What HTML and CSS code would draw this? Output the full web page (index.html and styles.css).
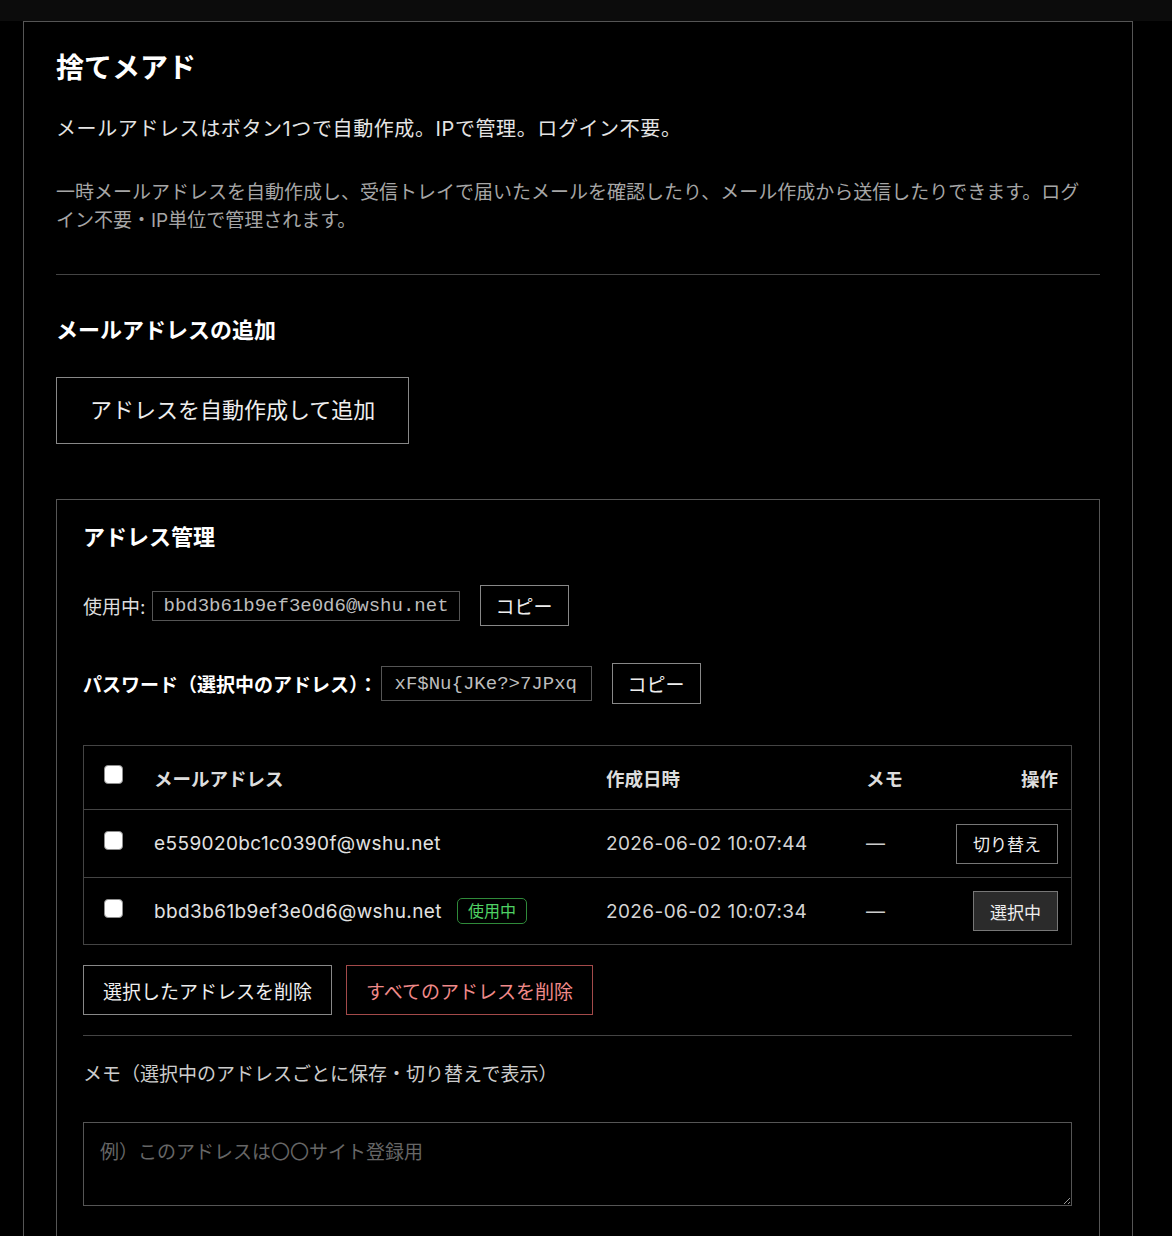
FILE: index.html
```html
<!DOCTYPE html>
<html lang="ja">
<head>
    <meta charset="UTF-8">
    <meta name="viewport" content="width=device-width, initial-scale=1.0">
    <title>捨てメアド</title>
    <link rel="stylesheet" href="styles.css">
</head>
<body>
    <div class="topbar"></div>

    <main class="page">
        <h1>捨てメアド</h1>
        <p class="lead">メールアドレスはボタン1つで自動作成。IPで管理。ログイン不要。</p>
        <p class="desc">一時メールアドレスを自動作成し、受信トレイで届いたメールを確認したり、メール作成から送信したりできます。ログイン不要・IP単位で管理されます。</p>

        <hr class="divider">

        <h2>メールアドレスの追加</h2>
        <button class="btn btn-large">アドレスを自動作成して追加</button>

        <section class="panel">
            <h3>アドレス管理</h3>

            <div class="field-row first">
                <span class="field-label">使用中:</span>
                <code class="current-address">bbd3b61b9ef3e0d6@wshu.net</code>
                <button class="btn btn-copy">コピー</button>
            </div>

            <div class="field-row">
                <span class="field-label strong">パスワード（選択中のアドレス）：</span>
                <input class="password-input" type="text" value="xF$Nu{JKe?>7JPxq" readonly>
                <button class="btn btn-copy">コピー</button>
            </div>

            <div class="address-table">
                <div class="table-row table-head">
                    <div><input type="checkbox" class="check"></div>
                    <div>メールアドレス</div>
                    <div>作成日時</div>
                    <div>メモ</div>
                    <div class="cell-right">操作</div>
                </div>
                <div class="table-row row-one">
                    <div><input type="checkbox" class="check"></div>
                    <div class="email-cell">e559020bc1c0390f@wshu.net</div>
                    <div class="date-cell">2026-06-02 10:07:44</div>
                    <div class="memo-cell">—</div>
                    <div class="cell-right"><button class="btn btn-row">切り替え</button></div>
                </div>
                <div class="table-row row-two">
                    <div><input type="checkbox" class="check"></div>
                    <div class="email-cell">bbd3b61b9ef3e0d6@wshu.net <span class="badge">使用中</span></div>
                    <div class="date-cell">2026-06-02 10:07:34</div>
                    <div class="memo-cell">—</div>
                    <div class="cell-right"><button class="btn btn-row selected">選択中</button></div>
                </div>
            </div>

            <div class="delete-actions">
                <button class="btn btn-delete">選択したアドレスを削除</button>
                <button class="btn btn-delete danger">すべてのアドレスを削除</button>
            </div>

            <hr class="divider small">

            <label class="memo-label" for="memo">メモ（選択中のアドレスごとに保存・切り替えで表示）</label>
            <textarea id="memo" class="memo-input" placeholder="例）このアドレスは〇〇サイト登録用"></textarea>
        </section>
    </main>
</body>
</html>
```

FILE: styles.css
```css
* {
    box-sizing: border-box;
}

body {
    margin: 0;
    background-color: #000;
    color: #e2e2e2;
    font-family: Inter, "Noto Sans CJK JP", sans-serif;
}

.topbar {
    height: 21px;
    background-color: #0c0c0c;
}

.page {
    width: 1110px;
    margin-left: 23px;
    border: 1px solid #555;
    border-bottom: none;
    padding: 32px 32px 40px;
}

h1 {
    margin: 0 0 32px;
    font-size: 28px;
    line-height: 28px;
    font-weight: 700;
    color: #fff;
}

.lead {
    margin: 0 0 35px;
    font-size: 20px;
    line-height: 30px;
    letter-spacing: 0.6px;
    color: #e4e4e4;
}

.desc {
    max-width: 1035px;
    margin: 0;
    font-size: 19px;
    line-height: 28px;
    color: #a6a6a6;
}

.divider {
    margin: 39px 0 40px;
    border: none;
    border-top: 1px solid #444;
}

.divider.small {
    margin: 20px 0 25px;
}

h2 {
    margin: 0 0 32px;
    font-size: 22px;
    line-height: 30px;
    font-weight: 700;
    color: #fff;
}

.btn {
    font-family: inherit;
    background-color: transparent;
    color: #eee;
    border: 1px solid #888;
    cursor: pointer;
}

.btn-large {
    display: block;
    padding: 16px 33px;
    font-size: 22px;
    line-height: 33px;
    margin-bottom: 55px;
}

.panel {
    border: 1px solid #555;
    padding: 22px 27px 80px 26px;
}

h3 {
    margin: 0 0 33px;
    font-size: 22px;
    line-height: 30px;
    font-weight: 700;
    color: #fff;
}

.field-row {
    display: flex;
    align-items: center;
    margin-bottom: 41px;
}

.field-row.first {
    margin-bottom: 37px;
}

.field-label {
    font-size: 19px;
    color: #ddd;
    margin-right: 7px;
}

.field-label.strong {
    font-weight: 700;
    color: #fff;
    margin-right: 3px;
}

.current-address {
    font-family: "Liberation Mono", monospace;
    font-size: 19px;
    line-height: 28px;
    padding: 0 10px;
    border: 1px solid #555;
    color: #bdbdbd;
}

.password-input {
    width: 211px;
    height: 35px;
    padding: 0 13px;
    font-family: "Liberation Mono", monospace;
    font-size: 19px;
    color: #bdbdbd;
    background-color: #000;
    border: 1px solid #555;
    outline: none;
}

.btn-copy {
    height: 41px;
    padding: 0 15px;
    margin-left: 20px;
    font-size: 19px;
}

.address-table {
    border: 1px solid #444;
}

.table-row {
    display: grid;
    grid-template-columns: 50px 452px 260px 1fr auto;
    align-items: center;
    padding: 0 13px 0 20px;
    font-size: 19px;
    color: #e2e2e2;
}

.table-head {
    height: 64px;
    border-bottom: 1px solid #444;
    font-size: 18.5px;
    font-weight: 700;
    color: #ddd;
}

.row-one {
    height: 68px;
    border-bottom: 1px solid #444;
}

.row-two {
    height: 66px;
}

.check {
    appearance: none;
    display: block;
    width: 19px;
    height: 19px;
    margin: 0 0 6px;
    background-color: #fff;
    border: 1px solid #8e8e8e;
    border-radius: 4px;
}

.email-cell {
    display: flex;
    align-items: center;
    gap: 15px;
    white-space: nowrap;
    letter-spacing: 0.4px;
}

.date-cell {
    color: #d4d4d4;
    letter-spacing: 0.4px;
}

.memo-cell {
    color: #ccc;
}

.cell-right {
    text-align: right;
}

.badge {
    font-size: 16px;
    line-height: 24px;
    letter-spacing: 0;
    padding: 0 10px;
    border: 1px solid #2f8a3a;
    border-radius: 5px;
    color: #4fd164;
}

.btn-row {
    height: 40px;
    padding: 0 16px;
    font-size: 17px;
    border-color: #777;
}

.btn-row.selected {
    background-color: #2b2b2b;
}

.delete-actions {
    display: flex;
    gap: 14px;
    margin-top: 20px;
}

.btn-delete {
    height: 50px;
    padding: 0 19px;
    font-size: 19px;
}

.btn-delete.danger {
    color: #f08a8a;
    border-color: #a34a4a;
}

.memo-label {
    display: block;
    margin-bottom: 33px;
    font-size: 19px;
    line-height: 28px;
    color: #ccc;
}

.memo-input {
    display: block;
    width: 100%;
    height: 84px;
    padding: 16px 16px 14px;
    font-family: inherit;
    font-size: 19px;
    line-height: 28px;
    color: #ddd;
    background-color: #000;
    border: 1px solid #555;
    outline: none;
}

.memo-input::placeholder {
    color: #666;
}
```
